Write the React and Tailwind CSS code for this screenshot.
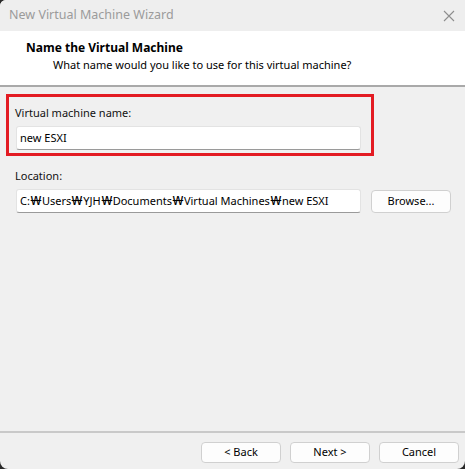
export default function App() {
  const font = { fontFamily: '"Segoe UI", "Noto Sans", "Open Sans", sans-serif' };
  const W = () => <span className="inline-block w-[12px] text-center text-[12px] [transform:scaleX(1.35)]">₩</span>;
  return (
    <div className="w-[465px] h-[469px] bg-[#2a2a2a]" style={font}>
      <div className="w-full h-full bg-[#f0f0f0] rounded-b-[8px] rounded-tl-[6px] overflow-hidden flex flex-col text-[11px] text-[#000]">
        {/* Title bar */}
        <div className="h-[31px] bg-[#eeeeee] flex items-center justify-between pl-[9px] pr-[8px] shrink-0">
          <span className="text-[12.5px] text-[#9b9b9b]">New Virtual Machine Wizard</span>
          <svg width="12" height="12" viewBox="0 0 12 12" className="mr-[2px]">
            <path d="M1 1 L11 11 M11 1 L1 11" stroke="#8e8e8e" strokeWidth="1.1" />
          </svg>
        </div>
        {/* Header */}
        <div className="h-[56px] bg-white border-b-2 border-[#a9a9a9] pl-[26px] pt-[8px] shrink-0">
          <div className="font-bold text-[12px] leading-[17px]">Name the Virtual Machine</div>
          <div className="pl-[27px] leading-[17px]">What name would you like to use for this virtual machine?</div>
        </div>
        {/* Body */}
        <div className="flex-1 flex flex-col pt-[7px] px-[6px]">
          <div className="w-[368px] h-[62px] border-[3px] border-[#e31b23] pl-[6px] pt-[8px]">
            <div className="leading-[15px] text-[#111]">Virtual machine name:</div>
            <div className="mt-[6px] ml-[1px] w-[345px] h-[24px] bg-white border border-[#e3e3e3] border-b-[#9a9a9a] rounded-[3px] flex items-center pl-[3px]">
              new ESXI
            </div>
          </div>
          <div className="pl-[9px] mt-[12px] leading-[15px] text-[#111]">Location:</div>
          <div className="flex items-center mt-[6px] pl-[10px]">
            <div className="w-[345px] h-[24px] bg-white border border-[#e3e3e3] border-b-[#9a9a9a] rounded-[3px] flex items-center pl-[3px] whitespace-nowrap">
              C:<W />Users<W />YJH<W />Documents<W />Virtual Machines<W />new ESXI
            </div>
            <button className="ml-[10px] w-[80px] h-[23px] bg-[#fdfdfd] border border-[#d0d0d0] rounded-[4px] flex items-center justify-center">
              Browse...
            </button>
          </div>
        </div>
        {/* Footer */}
        <div className="h-[38px] border-t-2 border-[#c9c9c9] flex justify-end items-start pt-[9px] pr-[6px] gap-[9px] shrink-0">
          <button className="w-[80px] h-[21px] bg-[#fdfdfd] border border-[#d0d0d0] rounded-[4px] flex items-center justify-center">&lt; Back</button>
          <button className="w-[80px] h-[21px] bg-[#fdfdfd] border border-[#d0d0d0] rounded-[4px] flex items-center justify-center">Next &gt;</button>
          <button className="w-[80px] h-[21px] bg-[#fdfdfd] border border-[#d0d0d0] rounded-[4px] flex items-center justify-center">Cancel</button>
        </div>
      </div>
    </div>
  );
}
